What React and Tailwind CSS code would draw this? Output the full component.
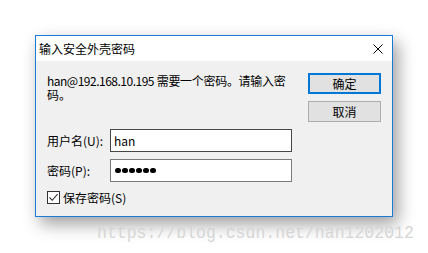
const font = { fontFamily: '"Noto Sans CJK SC", "Noto Sans", sans-serif' }

const CloseIcon = () => (
    <svg width="10" height="10" viewBox="0 0 10 10" className="block">
        <path d="M0.5 0.5 L9.5 9.5 M9.5 0.5 L0.5 9.5" stroke="#000" strokeWidth="1" fill="none" />
    </svg>
)

const CheckBox = () => (
    <div className="w-[13px] h-[13px] border border-[#333333] bg-white flex items-center justify-center">
        <svg width="11" height="11" viewBox="0 0 11 11" className="block">
            <path d="M1.5 5.5 L4.2 8.3 L9.6 2.2" stroke="#333333" strokeWidth="1.1" fill="none" />
        </svg>
    </div>
)

const PasswordDots = ({ count }) => (
    <div className="flex items-center gap-[1.5px]">
        {Array.from({ length: count }).map((_, i) => (
            <span key={i} className="w-[5.5px] h-[5.5px] rounded-full bg-black"></span>
        ))}
    </div>
)

const App = () => {
    return (
        <div className="relative w-[428px] h-[253px] bg-white pl-[35px] pt-[35px] text-black" style={font}>
            <div className="w-[358px] border border-[#1a7ad4] bg-[#f0f0f0] shadow-[5px_7px_16px_rgba(0,0,0,0.38)]">
                {/* title bar */}
                <div className="h-[25px] bg-white flex items-center justify-between pl-[3px] pr-[9px]">
                    <span className="text-[12px] leading-[13px]">输入安全外壳密码</span>
                    <CloseIcon />
                </div>

                <div className="pt-[12px] pl-[11px] pr-[11px] pb-[12px]">
                    <div className="flex justify-between items-start">
                        <div className="mt-[1px] text-[12px] whitespace-nowrap">
                            <p className="leading-[14px] h-[14px]">
                                <span className="tracking-[-0.5px]">han@192.168.10.195</span>{" "}
                                <span className="tracking-[-0.3px]">需要一个密码。请输入密</span>
                            </p>
                            <p className="leading-[14px] h-[14px]">码。</p>
                        </div>
                        <div className="flex flex-col gap-[7px] w-[73px]">
                            <button className="h-[21px] border-2 border-[#0078d7] bg-[#e1e1e1] text-[12px] leading-[13px] flex items-center justify-center">确定</button>
                            <button className="h-[21px] border border-[#adadad] bg-[#e1e1e1] text-[12px] leading-[13px] flex items-center justify-center">取消</button>
                        </div>
                    </div>

                    <div className="mt-[7px] flex flex-col gap-[7px]">
                        <div className="flex items-center">
                            <label className="w-[63px] text-[12px] leading-[13px]">用户名(U):</label>
                            <div className="w-[182px] h-[23px] border border-[#474747] bg-white flex items-center pl-[3px] text-[12px] leading-[13px]">han</div>
                        </div>
                        <div className="flex items-center">
                            <label className="w-[63px] text-[12px] leading-[13px]">密码(P):</label>
                            <div className="w-[182px] h-[23px] border border-[#7a7a7a] bg-white flex items-center pl-[4px]">
                                <PasswordDots count={6} />
                            </div>
                        </div>
                    </div>

                    <div className="mt-[9px] flex items-center gap-[3px]">
                        <CheckBox />
                        <span className="text-[12px] leading-[13px]">保存密码(S)</span>
                    </div>
                </div>
            </div>

            {/* watermark */}
            <div className="absolute left-[97px] top-[222px] text-[16.5px] leading-[20px] text-[#d6d6d6] whitespace-nowrap scale-y-[1.15] origin-top" style={{ fontFamily: '"Liberation Mono", monospace' }}>
                https://blog.csdn.net/han1202012
            </div>
        </div>
    )
}

export default App
